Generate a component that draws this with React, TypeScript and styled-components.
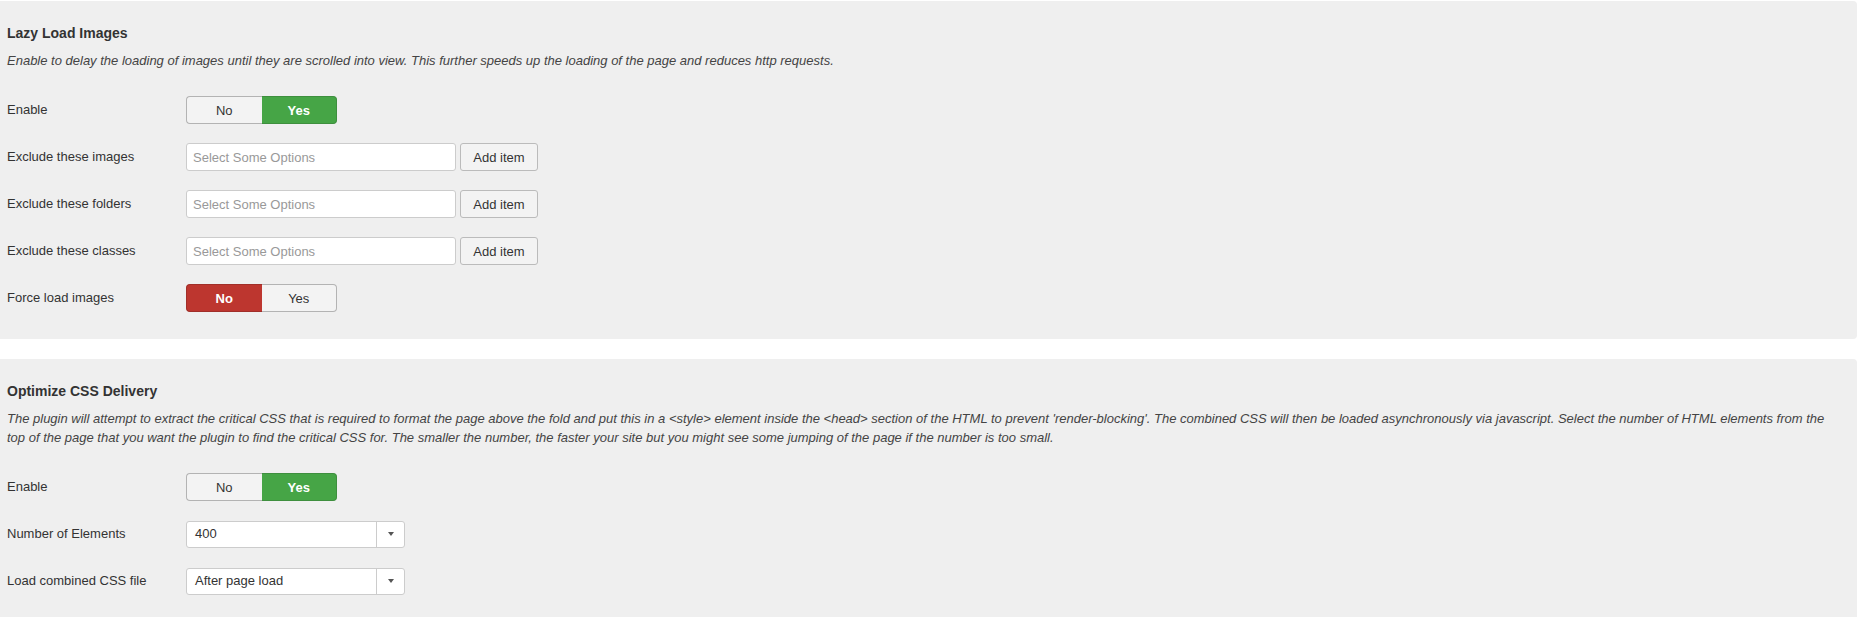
import styled, { createGlobalStyle } from "styled-components";

const GlobalStyle = createGlobalStyle`
  html, body {
    margin: 0;
    padding: 0;
    background: #fff;
  }
  body {
    font-family: "Liberation Sans", Arial, sans-serif;
    font-size: 13px;
    line-height: 18px;
    color: #333;
  }
  * {
    box-sizing: border-box;
  }
`;

const Page = styled.div`
  display: flex;
  flex-direction: column;
  gap: 20px;
  padding: 1px 2px 0 0;
`;

const Panel = styled.section`
  background: #efefef;
  border-radius: 0 4px 4px 0;
  padding: 23px 7px 27px 7px;
`;

const Title = styled.h4`
  margin: 0;
  font-size: 14px;
  line-height: 18px;
  font-weight: bold;
  color: #333;
`;

const Description = styled.p`
  margin: 9px 0 0;
  padding-right: 12px;
  font-size: 13px;
  line-height: 19px;
  font-style: italic;
  color: #444;
`;

const Fields = styled.div`
  display: flex;
  flex-direction: column;
  gap: 19px;
  margin-top: 26px;
`;

const Row = styled.div`
  display: grid;
  grid-template-columns: 179px auto;
  align-items: center;
  min-height: 28px;
`;

const Label = styled.label`
  font-size: 13px;
  color: #333;
`;

const Controls = styled.div`
  display: flex;
  align-items: center;
  gap: 4px;
`;

const Toggle = styled.div`
  display: flex;
  width: 151px;
  height: 28px;
`;

const ToggleOption = styled.button<{ $active?: boolean; $tone?: "yes" | "no" }>`
  flex: 1;
  height: 100%;
  margin: 0;
  font-family: inherit;
  font-size: 13px;
  cursor: pointer;
  border: 1px solid #b3b3b3;
  background: #f3f3f3;
  color: #333;
  font-weight: normal;
  &:first-child {
    border-radius: 4px 0 0 4px;
    border-right: none;
  }
  &:last-child {
    border-radius: 0 4px 4px 0;
    border-left: none;
  }
  ${(p) =>
    p.$active &&
    p.$tone === "yes" &&
    `
    background: #46a546;
    border-color: #3e8f3e;
    color: #fff;
    font-weight: bold;
  `}
  ${(p) =>
    p.$active &&
    p.$tone === "no" &&
    `
    background: #bd362f;
    border-color: #a12f29;
    color: #fff;
    font-weight: bold;
  `}
`;

const TextInput = styled.input`
  width: 270px;
  height: 28px;
  padding: 0 6px;
  border: 1px solid #ccc;
  border-radius: 3px;
  background: #fff;
  font-family: inherit;
  font-size: 13px;
  color: #333;
  &::placeholder {
    color: #999;
  }
`;

const Button = styled.button`
  height: 28px;
  width: 78px;
  padding: 0;
  border: 1px solid #bbb;
  border-radius: 3px;
  background: #f3f3f3;
  font-family: inherit;
  font-size: 13px;
  color: #333;
  cursor: pointer;
`;

const Select = styled.div`
  display: flex;
  width: 219px;
  height: 27px;
  border: 1px solid #ccc;
  border-radius: 3px;
  background: #fff;
`;

const SelectValue = styled.span`
  flex: 1;
  display: flex;
  align-items: center;
  padding-left: 8px;
  font-size: 13px;
  color: #333;
`;

const SelectArrow = styled.span`
  width: 28px;
  display: flex;
  align-items: center;
  justify-content: center;
  border-left: 1px solid #ccc;
  &::after {
    content: "";
    border-left: 3.5px solid transparent;
    border-right: 3.5px solid transparent;
    border-top: 4px solid #555;
  }
`;

function YesNo({ value }: { value: boolean }) {
  return (
    <Toggle>
      <ToggleOption $tone="no" $active={!value}>
        No
      </ToggleOption>
      <ToggleOption $tone="yes" $active={value}>
        Yes
      </ToggleOption>
    </Toggle>
  );
}

function AddList() {
  return (
    <Controls>
      <TextInput placeholder="Select Some Options" />
      <Button>Add item</Button>
    </Controls>
  );
}

function Dropdown({ value }: { value: string }) {
  return (
    <Select>
      <SelectValue>{value}</SelectValue>
      <SelectArrow />
    </Select>
  );
}

export default function App() {
  return (
    <>
      <GlobalStyle />
      <Page>
        <Panel>
          <Title>Lazy Load Images</Title>
          <Description>
            Enable to delay the loading of images until they are scrolled into view. This further
            speeds up the loading of the page and reduces http requests.
          </Description>
          <Fields>
            <Row>
              <Label>Enable</Label>
              <YesNo value={true} />
            </Row>
            <Row>
              <Label>Exclude these images</Label>
              <AddList />
            </Row>
            <Row>
              <Label>Exclude these folders</Label>
              <AddList />
            </Row>
            <Row>
              <Label>Exclude these classes</Label>
              <AddList />
            </Row>
            <Row>
              <Label>Force load images</Label>
              <YesNo value={false} />
            </Row>
          </Fields>
        </Panel>
        <Panel>
          <Title>Optimize CSS Delivery</Title>
          <Description>
            The plugin will attempt to extract the critical CSS that is required to format the page
            above the fold and put this in a &lt;style&gt; element inside the &lt;head&gt; section of
            the HTML to prevent 'render-blocking'. The combined CSS will then be loaded
            asynchronously via javascript. Select the number of HTML elements from the top of the
            page that you want the plugin to find the critical CSS for. The smaller the number, the
            faster your site but you might see some jumping of the page if the number is too small.
          </Description>
          <Fields>
            <Row>
              <Label>Enable</Label>
              <YesNo value={true} />
            </Row>
            <Row>
              <Label>Number of Elements</Label>
              <Dropdown value="400" />
            </Row>
            <Row>
              <Label>Load combined CSS file</Label>
              <Dropdown value="After page load" />
            </Row>
          </Fields>
        </Panel>
      </Page>
    </>
  );
}
